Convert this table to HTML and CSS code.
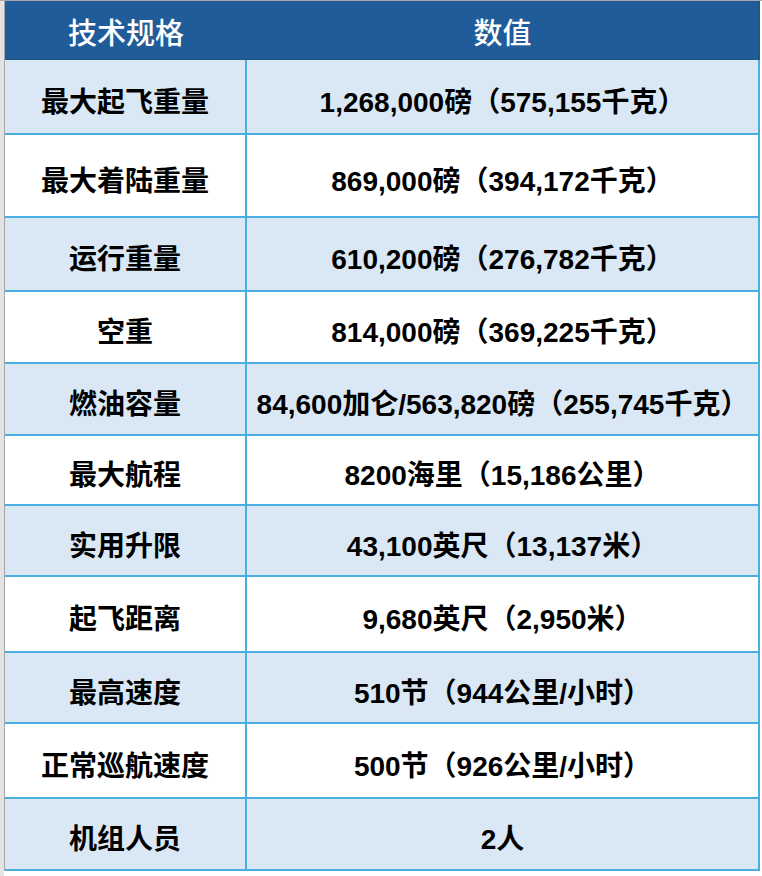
FILE: index.html
```html
<!DOCTYPE html>
<html lang="zh-CN">
<head>
<meta charset="utf-8">
<title>技术规格</title>
<link rel="stylesheet" href="styles.css">
</head>
<body>
<div class="sheet">
  <table class="spec">
    <colgroup><col class="c-name"><col class="c-value"></colgroup>
    <thead>
      <tr><th>技术规格</th><th>数值</th></tr>
    </thead>
    <tbody>
      <tr><td>最大起飞重量</td><td>1,268,000磅（575,155千克）</td></tr>
      <tr><td>最大着陆重量</td><td>869,000磅（394,172千克）</td></tr>
      <tr><td>运行重量</td><td>610,200磅（276,782千克）</td></tr>
      <tr><td>空重</td><td>814,000磅（369,225千克）</td></tr>
      <tr><td>燃油容量</td><td>84,600加仑/563,820磅（255,745千克）</td></tr>
      <tr><td>最大航程</td><td>8200海里（15,186公里）</td></tr>
      <tr><td>实用升限</td><td>43,100英尺（13,137米）</td></tr>
      <tr><td>起飞距离</td><td>9,680英尺（2,950米）</td></tr>
      <tr><td>最高速度</td><td>510节（944公里/小时）</td></tr>
      <tr><td>正常巡航速度</td><td>500节（926公里/小时）</td></tr>
      <tr><td>机组人员</td><td>2人</td></tr>
    </tbody>
  </table>
</div>
</body>
</html>
```
FILE: styles.css
```css
html, body {
  margin: 0;
  padding: 0;
  background: #ffffff;
}

.sheet {
  display: flex;
  align-items: flex-start;
  width: 762px;
  height: 876px;
  box-sizing: border-box;
  border-top: 1px solid #a9a9a9;
  padding-left: 4px;
  background: linear-gradient(to right, #e3e3e3 0, #e3e3e3 4px, #ffffff 4px);
}

.spec {
  border-collapse: separate;
  border-spacing: 0;
  border-left: 1px solid #a6a6a6;
  table-layout: fixed;
  width: 755px;
  font-family: "Liberation Sans", "Noto Sans CJK SC", sans-serif;
  font-weight: bold;
  color: #000000;
}

.c-name { width: 242px; }
.c-value { width: 513px; }

.spec th,
.spec td {
  padding: 0;
  text-align: center;
  vertical-align: middle;
  box-sizing: border-box;
  white-space: nowrap;
}

.spec th {
  background: #1f5c99;
  color: #ffffff;
  font-size: 29px;
  font-weight: 500;
  height: 59px;
  border-bottom: 1px solid #1b5a7a;
  padding-top: 2px;
}

.spec th:last-child {
  border-right: 2px solid #1b5a7a;
}

.spec td {
  font-size: 28px;
  border-bottom: 2px solid #4aaee0;
  padding-top: 6px;
}

.spec td:first-child {
  border-right: 2px solid #4aaee0;
}

.spec td:last-child {
  border-right: 2px solid #4aaee0;
}

.spec tbody tr:nth-child(odd) td {
  background: #dae8f6;
}

.spec tbody tr:nth-child(even) td {
  background: #ffffff;
}

.spec tbody tr:nth-child(1) td { height: 75px; }
.spec tbody tr:nth-child(2) td { height: 83px; }
.spec tbody tr:nth-child(3) td { height: 74px; }
.spec tbody tr:nth-child(4) td { height: 72px; }
.spec tbody tr:nth-child(5) td { height: 72px; }
.spec tbody tr:nth-child(6) td { height: 70px; }
.spec tbody tr:nth-child(7) td { height: 71px; }
.spec tbody tr:nth-child(8) td { height: 76px; }
.spec tbody tr:nth-child(9) td { height: 71px; }
.spec tbody tr:nth-child(10) td { height: 75px; }
.spec tbody tr:nth-child(11) td { height: 72px; }
```
